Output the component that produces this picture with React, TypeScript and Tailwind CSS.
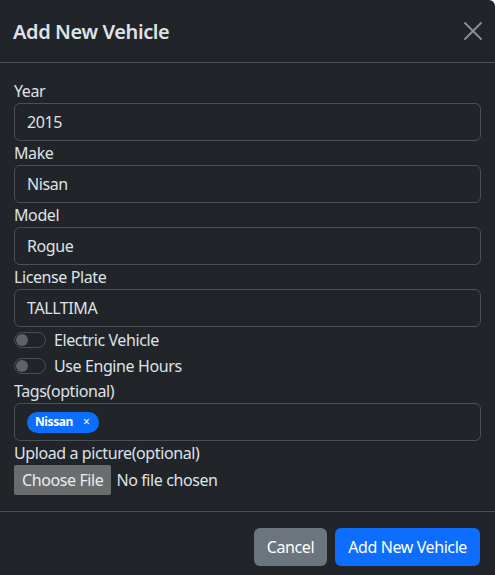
import { X } from 'lucide-react'

const font = { fontFamily: '"Noto Sans", "Open Sans", sans-serif', letterSpacing: '-0.025em' }

function Field({ label, value }: { label: string; value: string }) {
  return (
    <div className="flex flex-col">
      <label className="h-6 leading-6 text-[16px] text-[#dee2e6]">{label}</label>
      <div className="h-[38px] rounded-[6px] border border-[#495057] bg-[#212529] px-3 flex items-center text-[16px] text-[#dee2e6]">
        {value}
      </div>
    </div>
  )
}

function Switch({ label }: { label: string }) {
  return (
    <div className="h-[26px] flex items-center gap-[8px]">
      <span className="w-8 h-4 rounded-full border border-[#495057] bg-[#212529] flex items-center px-[1px]">
        <span className="w-[12px] h-[12px] rounded-full bg-[#5f6367]" />
      </span>
      <span className="text-[16px] text-[#dee2e6]">{label}</span>
    </div>
  )
}

export default function App() {
  return (
    <div className="w-[495px] h-[575px] bg-[#212529] overflow-hidden rounded-tr-[6px]" style={font}>
      {/* Header */}
      <div className="h-[63px] border-b border-[#495057] flex items-center justify-between pl-[13px] pr-[6px]">
        <h5 className="text-[20px] font-semibold text-[#dee2e6] pt-[2px]">Add New Vehicle</h5>
        <X className="w-[32px] h-[32px] text-[#8c8e91]" strokeWidth={1.4} />
      </div>

      {/* Body */}
      <div className="px-[14px] pt-[16px] pb-[16px] flex flex-col">
        <Field label="Year" value="2015" />
        <Field label="Make" value="Nisan" />
        <Field label="Model" value="Rogue" />
        <Field label="License Plate" value="TALLTIMA" />
        <Switch label="Electric Vehicle" />
        <Switch label="Use Engine Hours" />
        <div className="flex flex-col">
          <label className="h-6 leading-6 text-[16px] text-[#dee2e6]">Tags(optional)</label>
          <div className="h-[38px] rounded-[6px] border border-[#495057] bg-[#212529] px-3 flex items-center">
            <span className="h-[21px] rounded-full bg-[#0d6efd] text-white text-[12px] font-bold flex items-center pl-[8px] pr-[10px] gap-[10px]">
              Nissan
              <span className="font-normal text-[12px]">×</span>
            </span>
          </div>
        </div>
        <div className="flex flex-col">
          <label className="h-6 leading-6 text-[16px] text-[#dee2e6]">Upload a picture(optional)</label>
          <div className="h-[30px] flex items-center">
            <span className="h-[30px] px-[8px] bg-[#6a6c6e] text-[#e9ecef] text-[16px] flex items-center rounded-[2px]">Choose File</span>
            <span className="ml-[5px] text-[16px] text-[#dee2e6]">No file chosen</span>
          </div>
        </div>
      </div>

      {/* Footer */}
      <div className="border-t border-[#495057] flex justify-end gap-[8px] pt-[16px] pr-[15px]">
        <button className="h-[38px] px-[13px] rounded-[6px] bg-[#6c757d] text-white text-[16px]">Cancel</button>
        <button className="h-[38px] px-[13px] rounded-[6px] bg-[#0d6efd] text-white text-[16px]">Add New Vehicle</button>
      </div>
    </div>
  )
}
